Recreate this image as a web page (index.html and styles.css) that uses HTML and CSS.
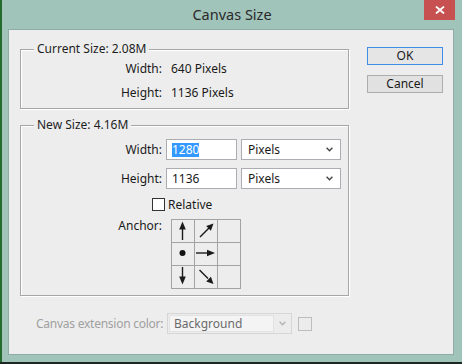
FILE: index.html
```html
<!DOCTYPE html>
<html>
<head>
<meta charset="utf-8">
<title>Canvas Size</title>
<link rel="stylesheet" href="styles.css">
</head>
<body>
<div class="window">
  <div class="titlebar">
    <div class="title">Canvas Size</div>
    <button class="close" aria-label="Close">
      <svg width="10" height="8" viewBox="0 0 10 8"><path d="M1 0.5L9 7.5M9 0.5L1 7.5" stroke="#fff" stroke-width="1.8" fill="none"/></svg>
    </button>
  </div>
  <div class="client">
    <div class="main">
      <section class="group current">
        <div class="group-title">Current Size: 2.08M</div>
        <div class="info-row"><span class="lbl">Width:</span><span class="val">640 Pixels</span></div>
        <div class="info-row"><span class="lbl">Height:</span><span class="val">1136 Pixels</span></div>
      </section>
      <section class="group newsize">
        <div class="group-title">New Size: 4.16M</div>
        <div class="field-row first">
          <span class="lbl">Width:</span>
          <div class="input"><span class="sel">1280</span></div>
          <div class="select"><span>Pixels</span><svg class="chev" width="7" height="5" viewBox="0 0 7 5"><path d="M0.6 0.8L3.5 3.8L6.4 0.8" stroke="#444" stroke-width="1.4" fill="none"/></svg></div>
        </div>
        <div class="field-row second">
          <span class="lbl">Height:</span>
          <div class="input"><span>1136</span></div>
          <div class="select"><span>Pixels</span><svg class="chev" width="7" height="5" viewBox="0 0 7 5"><path d="M0.6 0.8L3.5 3.8L6.4 0.8" stroke="#444" stroke-width="1.4" fill="none"/></svg></div>
        </div>
        <div class="check-row"><span class="checkbox"></span><span>Relative</span></div>
        <div class="anchor-row">
          <span class="lbl">Anchor:</span>
          <div class="anchor-grid">
            <div class="cell"><svg viewBox="0 0 22 22" width="22" height="22"><path d="M10.5 8V20" stroke="#1a1a1a" stroke-width="1.4"/><polygon points="10.5,1.5 7.2,9.5 13.8,9.5" fill="#1a1a1a"/></svg></div>
            <div class="cell"><svg viewBox="0 0 22 22" width="22" height="22"><path d="M5 17L14 8" stroke="#1a1a1a" stroke-width="1.4"/><polygon points="18.5,3.5 15.9,10.8 11.2,6.1" fill="#1a1a1a"/></svg></div>
            <div class="cell"></div>
            <div class="cell"><svg viewBox="0 0 22 22" width="22" height="22"><circle cx="10.5" cy="10" r="3" fill="#111"/></svg></div>
            <div class="cell"><svg viewBox="0 0 22 22" width="22" height="22"><path d="M1 10H13" stroke="#1a1a1a" stroke-width="1.4"/><polygon points="20,10 12,6.7 12,13.3" fill="#1a1a1a"/></svg></div>
            <div class="cell"></div>
            <div class="cell"><svg viewBox="0 0 22 22" width="22" height="22"><path d="M10.5 1V12" stroke="#1a1a1a" stroke-width="1.4"/><polygon points="10.5,18.5 7.2,10.5 13.8,10.5" fill="#1a1a1a"/></svg></div>
            <div class="cell"><svg viewBox="0 0 22 22" width="22" height="22"><path d="M4.5 4L13 12.5" stroke="#1a1a1a" stroke-width="1.4"/><polygon points="18.5,18 15.9,10.7 11.2,15.4" fill="#1a1a1a"/></svg></div>
            <div class="cell"></div>
          </div>
        </div>
      </section>
      <div class="ext-row">
        <span class="ext-lbl">Canvas extension color:</span>
        <div class="ext-select">
          <div class="ext-inner">Background</div>
          <svg class="chev" width="7" height="5" viewBox="0 0 7 5"><path d="M0.6 0.8L3.5 3.8L6.4 0.8" stroke="#b5b5b5" stroke-width="1.4" fill="none"/></svg>
        </div>
        <span class="swatch"></span>
      </div>
    </div>
    <div class="buttons">
      <button class="btn default">OK</button>
      <button class="btn">Cancel</button>
    </div>
  </div>
</div>
</body>
</html>
```

FILE: styles.css
```css
* { box-sizing: border-box; }
html, body { margin: 0; padding: 0; }
body {
  width: 462px;
  height: 364px;
  overflow: hidden;
  background: #1c2623;
  font-family: "Noto Sans", "Liberation Sans", sans-serif;
  font-size: 12px;
  color: #1a1a1a;
}
.window {
  height: 362px;
  background: #a0c3ba;
  border-left: 2px solid #256b2c;
  display: flex;
  flex-direction: column;
}
.titlebar {
  height: 29px;
  display: grid;
  grid-template-columns: 1fr auto 1fr;
  align-items: start;
}
.title {
  grid-column: 2;
  font-size: 14.5px;
  line-height: 20px;
  padding-top: 4px;
  color: #2a2a2a;
}
.close {
  grid-column: 3;
  justify-self: end;
  margin-right: 7px;
  width: 31px;
  height: 20px;
  background: #c75050;
  border: 0;
  padding: 0;
  display: flex;
  align-items: center;
  justify-content: center;
}
.client {
  margin-left: 6px;
  width: 446px;
  height: 326px;
  background: #ededed;
  border: 1px solid #8eaea5;
  display: flex;
}
.main {
  width: 340px;
  padding: 19px 0 0 11px;
}
.group {
  width: 329px;
  border: 1px solid #a6a6a6;
  box-shadow: 1px 1px 0 #fff, inset 1px 1px 0 #fff;
}
.group-title {
  margin: -8px 0 0 13px;
  padding: 0 3px;
  width: max-content;
  line-height: 14px;
  background: #ededed;
  color: #1e1e1e;
}
.current { height: 60px; }
.info-row {
  height: 24px;
  display: flex;
  align-items: center;
  gap: 9px;
}
.current .group-title + .info-row { margin-top: 1px; }
.lbl {
  width: 141px;
  text-align: right;
  line-height: 14px;
  flex: none;
}
.val { line-height: 14px; }
.newsize {
  margin-top: 16px;
  height: 171px;
}
.field-row {
  height: 21px;
  display: flex;
  align-items: center;
  gap: 4px;
}
.field-row.first { margin-top: 7px; }
.field-row.second { margin-top: 8px; }
.input {
  width: 71px;
  height: 21px;
  border: 1px solid #abadb3;
  background: #fff;
  padding-left: 5px;
  display: flex;
  align-items: center;
  line-height: 14px;
}
.sel { background: #3399ff; color: #fff; }
.select {
  width: 100px;
  height: 21px;
  border: 1px solid #abadb3;
  background: #fff;
  padding: 0 7px 0 6px;
  display: flex;
  align-items: center;
  justify-content: space-between;
  line-height: 14px;
}
.check-row {
  margin-top: 9px;
  height: 13px;
  padding-left: 131px;
  display: flex;
  align-items: center;
  gap: 3px;
  line-height: 14px;
}
.checkbox {
  width: 13px;
  height: 13px;
  border: 1px solid #333;
  background: #fff;
  flex: none;
}
.anchor-row {
  margin-top: 8px;
  display: flex;
  align-items: flex-start;
  gap: 9px;
}
.anchor-grid {
  display: grid;
  grid-template-columns: repeat(3, 22px);
  grid-template-rows: repeat(3, 22px);
  gap: 1px;
  padding: 1px;
  background: #a3a3a3;
}
.cell { background: #ededed; }
.cell svg { display: block; }
.ext-row {
  margin-top: 17px;
  height: 21px;
  display: flex;
  align-items: center;
  padding-left: 16px;
}
.ext-lbl {
  width: 131px;
  flex: none;
  white-space: nowrap;
  letter-spacing: -0.25px;
  color: #a0a0a0;
  line-height: 14px;
}
.ext-select {
  width: 125px;
  height: 21px;
  border: 1px solid #d6d6d6;
  background: #ececec;
  padding: 1px 5px 1px 1px;
  display: flex;
  align-items: center;
  justify-content: space-between;
}
.ext-inner {
  width: 105px;
  height: 17px;
  border: 1px solid #e2e2e2;
  background: #f4f4f4;
  color: #6a6a6a;
  padding-left: 4px;
  line-height: 15px;
}
.swatch {
  margin-left: 6px;
  width: 14px;
  height: 14px;
  border: 1px solid #bdbdbd;
  background: #ececec;
}
.buttons {
  margin-left: 18px;
  padding-top: 17px;
  display: flex;
  flex-direction: column;
  gap: 10px;
}
.btn {
  width: 76px;
  height: 18px;
  padding: 0;
  font-family: inherit;
  font-size: 12px;
  line-height: 14px;
  color: #1a1a1a;
  background: #e1e1e1;
  border: 1px solid #adadad;
}
.btn.default {
  border-color: #3c8ee6;
  background: #e5e5e5;
}
```
